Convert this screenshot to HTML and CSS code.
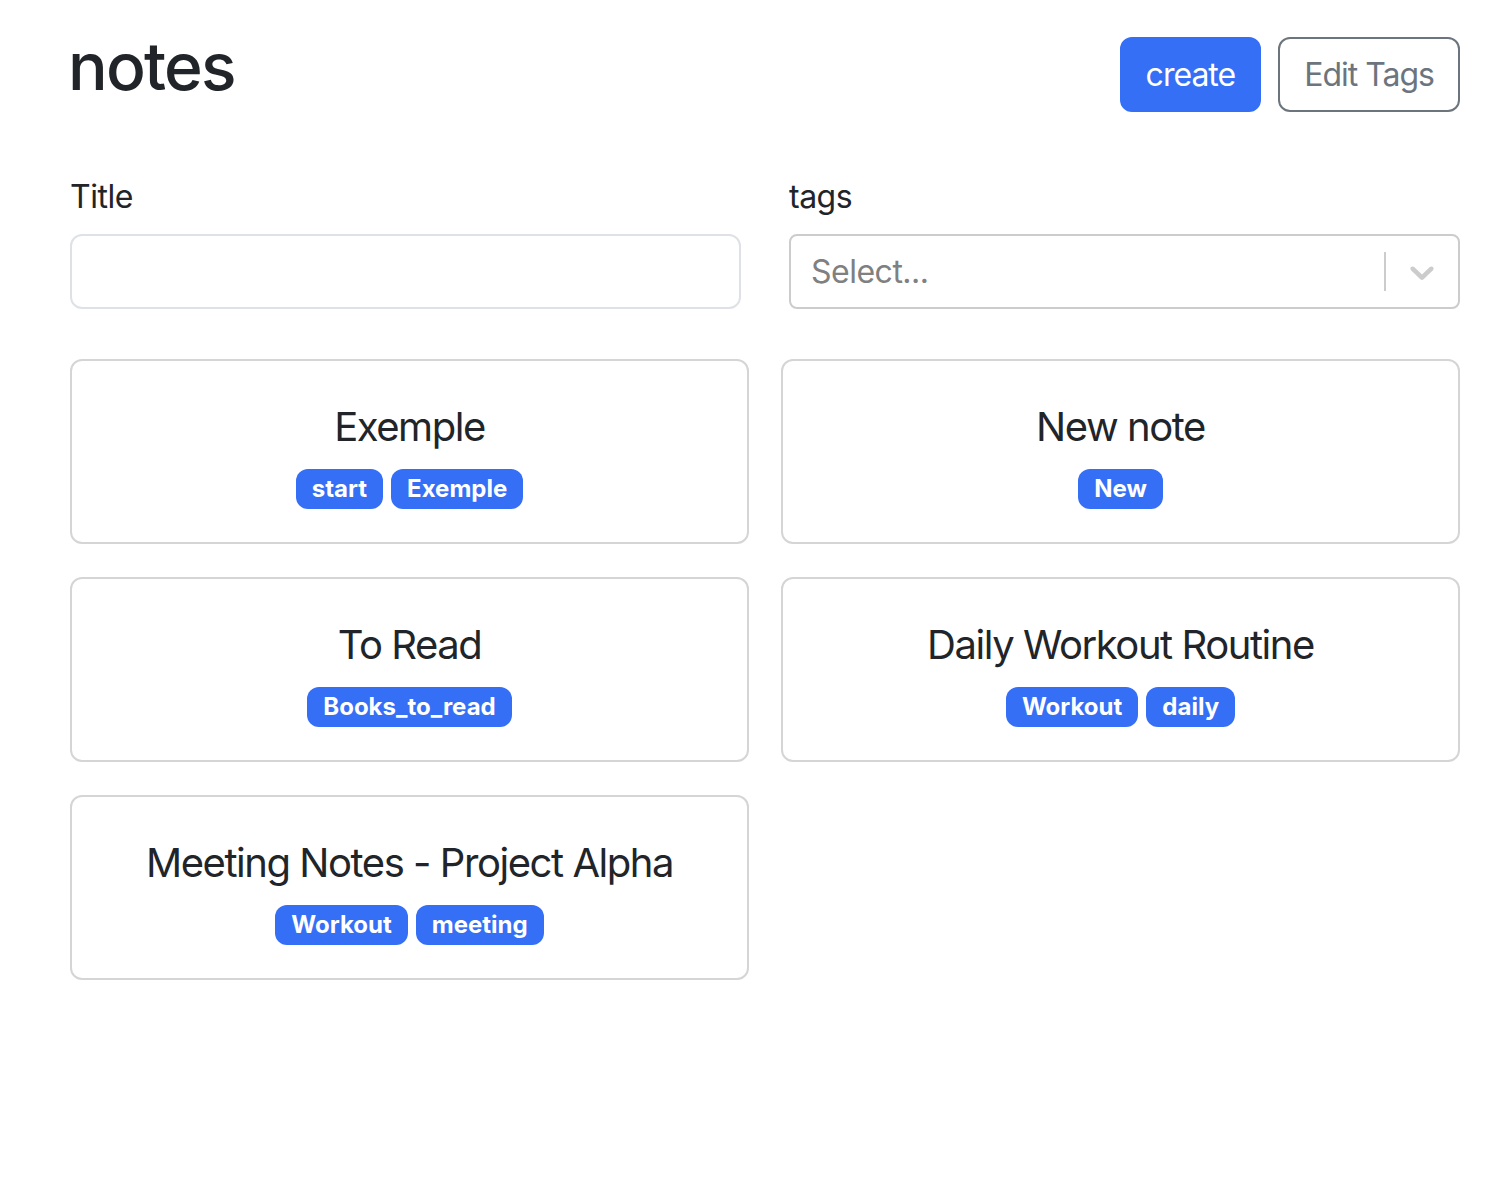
FILE: index.html
```html
<!DOCTYPE html>
<html lang="en">
<head>
<meta charset="utf-8">
<title>notes</title>
<link rel="stylesheet" href="styles.css">
</head>
<body>
<div class="container">
  <header class="header">
    <h1 class="page-title">notes</h1>
    <div class="actions">
      <button class="btn btn-primary">create</button>
      <button class="btn btn-outline">Edit Tags</button>
    </div>
  </header>

  <form class="filters">
    <div class="field">
      <label class="label" for="title">Title</label>
      <input class="input" id="title" type="text">
    </div>
    <div class="field">
      <label class="label">tags</label>
      <div class="select">
        <div class="select-value">Select...</div>
        <div class="select-indicators">
          <span class="select-sep"></span>
          <span class="select-arrow">
            <svg viewBox="0 0 20 20" width="40" height="40" aria-hidden="true"><path d="M4.516 7.548c0.436-0.446 1.043-0.481 1.576 0l3.908 3.747 3.908-3.747c0.533-0.481 1.141-0.446 1.574 0 0.436 0.445 0.408 1.197 0 1.615-0.406 0.418-4.695 4.502-4.695 4.502-0.217 0.223-0.502 0.335-0.787 0.335s-0.57-0.112-0.789-0.335c0 0-4.287-4.084-4.695-4.502s-0.436-1.17 0-1.615z" fill="currentColor"/></svg>
          </span>
        </div>
      </div>
    </div>
  </form>

  <div class="cards">
    <a class="card" href="#">
      <span class="card-title">Exemple</span>
      <div class="tags"><span class="badge">start</span><span class="badge">Exemple</span></div>
    </a>
    <a class="card" href="#">
      <span class="card-title">New note</span>
      <div class="tags"><span class="badge">New</span></div>
    </a>
    <a class="card" href="#">
      <span class="card-title">To Read</span>
      <div class="tags"><span class="badge">Books_to_read</span></div>
    </a>
    <a class="card" href="#">
      <span class="card-title">Daily Workout Routine</span>
      <div class="tags"><span class="badge">Workout</span><span class="badge">daily</span></div>
    </a>
    <a class="card" href="#">
      <span class="card-title">Meeting Notes - Project Alpha</span>
      <div class="tags"><span class="badge">Workout</span><span class="badge">meeting</span></div>
    </a>
  </div>
</div>
</body>
</html>
```

FILE: styles.css
```css
* { box-sizing: border-box; }

body {
  margin: 0;
  background: #fff;
  color: #212529;
  font-family: Inter, "Noto Sans", "Liberation Sans", sans-serif;
  font-size: 32px;
  line-height: 1.5;
  letter-spacing: -0.5px;
}

.container {
  padding: 27px 48px 0 70px;
}

.header {
  display: flex;
  align-items: center;
  justify-content: space-between;
  margin-bottom: 49px;
}

.page-title {
  margin: 0 0 16px -2px;
  font-size: 66px;
  line-height: 1.2;
  font-weight: 500;
  letter-spacing: -1.8px;
}

.actions {
  display: flex;
  gap: 17px;
}

.btn {
  font-family: inherit;
  font-size: 32px;
  line-height: 47px;
  letter-spacing: -1px;
  padding: 12px 24px;
  border-radius: 12px;
  border: 2px solid transparent;
  cursor: pointer;
}

.btn-primary {
  background: #346ff6;
  border-color: #346ff6;
  color: #fff;
}

.btn-outline {
  background: #fff;
  border-color: #6c757d;
  color: #6c757d;
}

.filters {
  display: grid;
  grid-template-columns: 1fr 1fr;
  column-gap: 48px;
  margin: 0 0 50px;
}

.label {
  display: block;
  line-height: 48px;
  margin-bottom: 13px;
  padding-top: 2px;
}

.input {
  display: block;
  width: 100%;
  height: 75px;
  border: 2px solid #dee2e6;
  border-radius: 12px;
  font: inherit;
  padding: 0 24px;
}

.select {
  display: flex;
  align-items: center;
  height: 75px;
  border: 2px solid #cccccc;
  border-radius: 8px;
  background: #fff;
}

.select-value {
  flex: 1;
  padding: 0 20px;
  color: #808080;
}

.select-indicators {
  display: flex;
  align-items: center;
  align-self: stretch;
}

.select-sep {
  width: 2px;
  align-self: stretch;
  margin: 16px 0;
  background: #cccccc;
}

.select-arrow {
  display: flex;
  padding: 16px;
  color: #cccccc;
}

.cards {
  display: grid;
  grid-template-columns: 1fr 1fr;
  gap: 33px 32px;
}

.card {
  display: flex;
  flex-direction: column;
  align-items: center;
  justify-content: center;
  gap: 12px;
  padding: 33px 32px;
  border: 2px solid #d5d5d5;
  border-radius: 12px;
  color: inherit;
  text-decoration: none;
}

.card-title {
  font-size: 40px;
  line-height: 60px;
  letter-spacing: -1.45px;
  padding-top: 3px;
}

.tags {
  display: flex;
  flex-wrap: wrap;
  justify-content: center;
  gap: 8px;
}

.badge {
  display: inline-block;
  background: #346ff6;
  color: #fff;
  font-size: 24px;
  font-weight: 700;
  line-height: 1;
  letter-spacing: 0;
  padding: 8px 16px;
  border-radius: 12px;
  white-space: nowrap;
}
```
